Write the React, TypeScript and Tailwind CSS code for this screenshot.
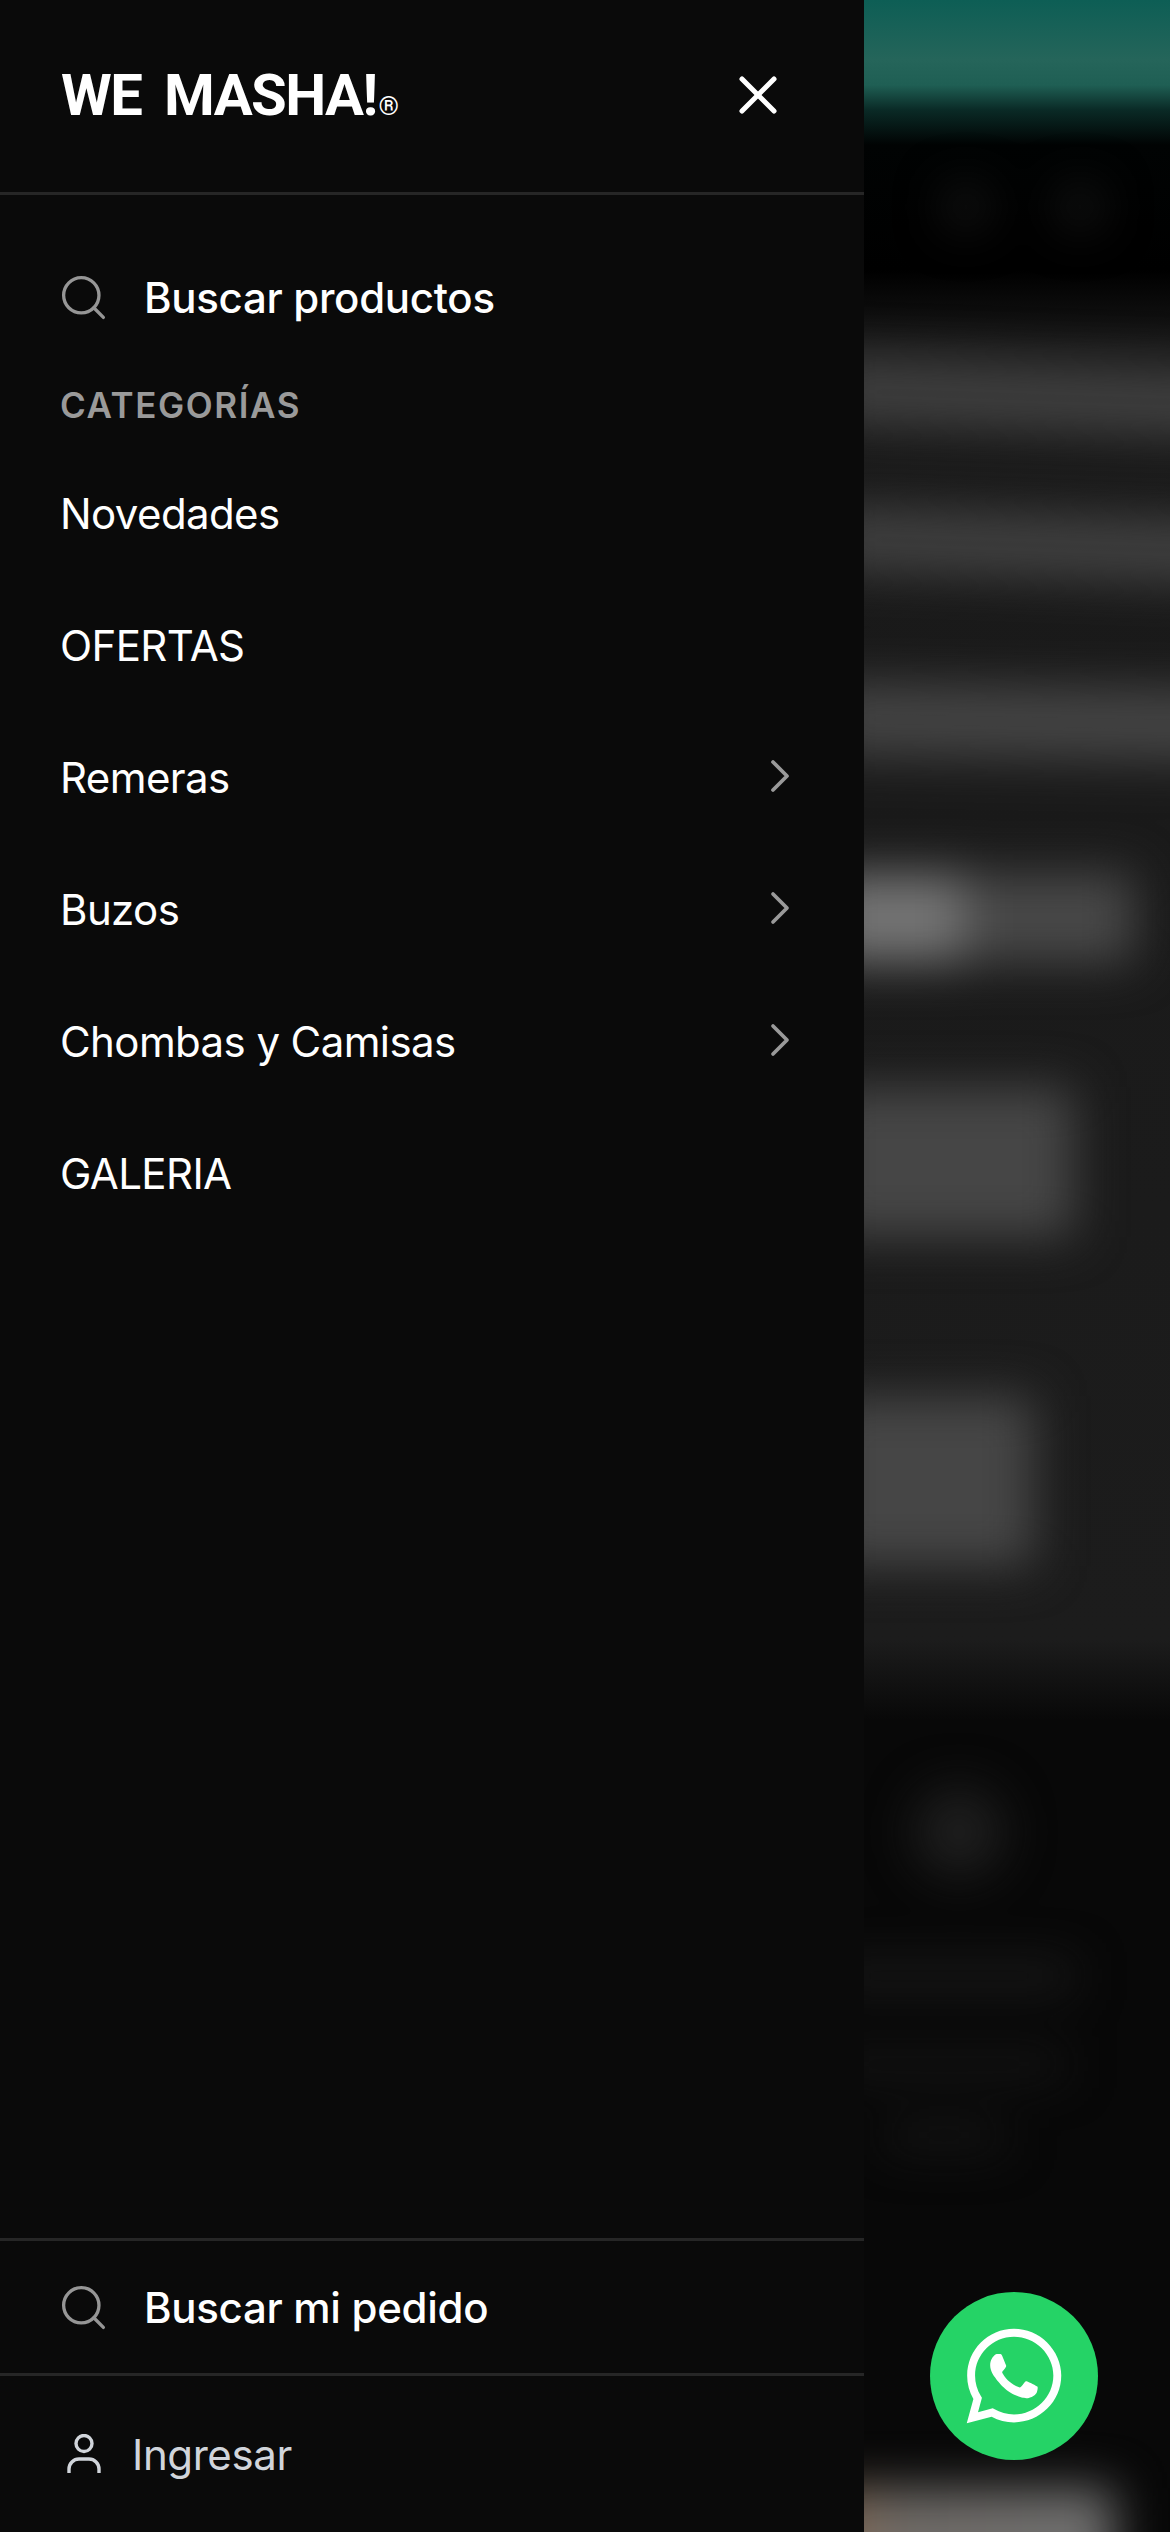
import { ChevronRight, Search, X } from "lucide-react";
import { FaWhatsapp } from "react-icons/fa";

const categories = [
  { label: "Novedades", sub: false },
  { label: "OFERTAS", sub: false },
  { label: "Remeras", sub: true },
  { label: "Buzos", sub: true },
  { label: "Chombas y Camisas", sub: true },
  { label: "GALERIA", sub: false },
];

const SearchRow = ({ label }: { label: string }) => (
  <div className="flex h-[132px] items-center pl-[58px]">
    <Search size={53} strokeWidth={1.5} className="-ml-[1px] shrink-0 text-[#969696]" />
    <span className="ml-[34px] text-[42px] font-medium tracking-[-0.3px] text-white">{label}</span>
  </div>
);

const Backdrop = () => (
  <div className="relative flex-1 overflow-hidden bg-[linear-gradient(180deg,#0d5e55_0px,#25655a_60px,#1f5f54_85px,#0a2a26_110px,#010303_145px,#000000_270px,#191919_350px,#1c1c1c_1640px,#080808_1720px,#080808_2532px)]">
    <div className="flex flex-col blur-[24px]">
      <div className="ml-[80px] mt-[185px] flex gap-[70px]">
        <div className="size-[44px] rounded-full bg-[#181818]" />
        <div className="size-[44px] rounded-full bg-[#181818]" />
      </div>
      <div className="-ml-[40px] mt-[136px] h-[66px] w-[460px] rotate-[2deg] bg-[#404040]" />
      <div className="-ml-[40px] mt-[82px] h-[66px] w-[460px] rotate-[2deg] bg-[#404040]" />
      <div className="-ml-[40px] mt-[106px] h-[74px] w-[420px] rotate-[1deg] bg-[#444444]" />
      <div className="-ml-[40px] mt-[114px] flex h-[90px] w-[310px]">
        <div className="w-[140px] bg-[#747474]" />
        <div className="flex-1 bg-[#484848]" />
      </div>
      <div className="-ml-[40px] mt-[124px] h-[150px] w-[250px] bg-[#464646]" />
      <div className="-ml-[40px] mt-[159px] h-[170px] w-[210px] bg-[#464646]" />
      <div className="ml-[50px] mt-[221px] h-[90px] w-[90px] rounded-full bg-[#1e1e1e]" />
      <div className="-ml-[40px] mt-[87px] h-[24px] w-[250px] bg-[#1e1e1e]" />
      <div className="-ml-[40px] mt-[64px] h-[24px] w-[240px] bg-[#171717]" />
      <div className="ml-[20px] mt-[48px] h-[24px] w-[120px] bg-[#171717]" />
      <div className="-ml-[40px] mt-[340px] h-[100px] w-[290px] bg-[linear-gradient(90deg,#8a6a50_0px,#6e6a66_70px,#707070_100%)]" />
    </div>
    <div className="absolute left-[66px] top-[2292px] flex size-[168px] items-center justify-center rounded-full bg-[#25d366] text-white">
      <FaWhatsapp size={108} />
    </div>
  </div>
);

export default function App() {
  return (
    <div className="flex h-[2532px] w-[1170px] overflow-hidden bg-black font-['Inter','Noto_Sans',sans-serif]">
      <aside className="flex w-[864px] shrink-0 flex-col bg-[#0a0a0a]">
        <header className="flex h-[195px] shrink-0 items-center justify-between border-b-[3px] border-[#262626] pb-[2px] pl-[61px] pr-[74px]">
          <div className="flex items-end font-['Roboto',sans-serif] text-white">
            <span className="text-[58px] leading-[42px] font-bold tracking-[-1.6px] [word-spacing:10px]">WE MASHA!</span>
            <span className="ml-[2px] text-[26px] leading-[20px]">®</span>
          </div>
          <X size={64} strokeWidth={1.9} className="text-white" />
        </header>

        <div className="mt-[36px]">
          <SearchRow label="Buscar productos" />
        </div>
        <p className="flex h-[82px] items-center pl-[60px] pt-[2px] text-[35px] font-semibold tracking-[1.6px] text-[#9a9a9a]">
          CATEGORÍAS
        </p>

        <nav>
          {categories.map((c) => (
            <div key={c.label} className="flex h-[132px] items-center justify-between pl-[60px] pr-[56px]">
              <span className="pt-[4px] text-[42px] tracking-[-0.6px] text-white">{c.label}</span>
              {c.sub && <ChevronRight size={56} strokeWidth={1.6} className="mt-[2px] text-[#9a9a9a]" />}
            </div>
          ))}
        </nav>

        <div className="flex-1" />

        <div className="border-t-[3px] border-[#262626]">
          <SearchRow label="Buscar mi pedido" />
        </div>
        <div className="flex h-[159px] items-center border-t-[3px] border-[#262626] pl-[67px]">
          <svg viewBox="0 0 34 40" className="h-[40px] w-[34px] text-[#d1d5db]" fill="none" stroke="currentColor" strokeWidth="3.4">
            <circle cx="17" cy="9.5" r="8" />
            <path d="M2 39v-4a10 10 0 0 1 10-10h10a10 10 0 0 1 10 10v4" />
          </svg>
          <span className="ml-[31px] text-[42px] tracking-[-0.4px] text-[#d1d5db]">Ingresar</span>
        </div>
      </aside>
      <Backdrop />
    </div>
  );
}
